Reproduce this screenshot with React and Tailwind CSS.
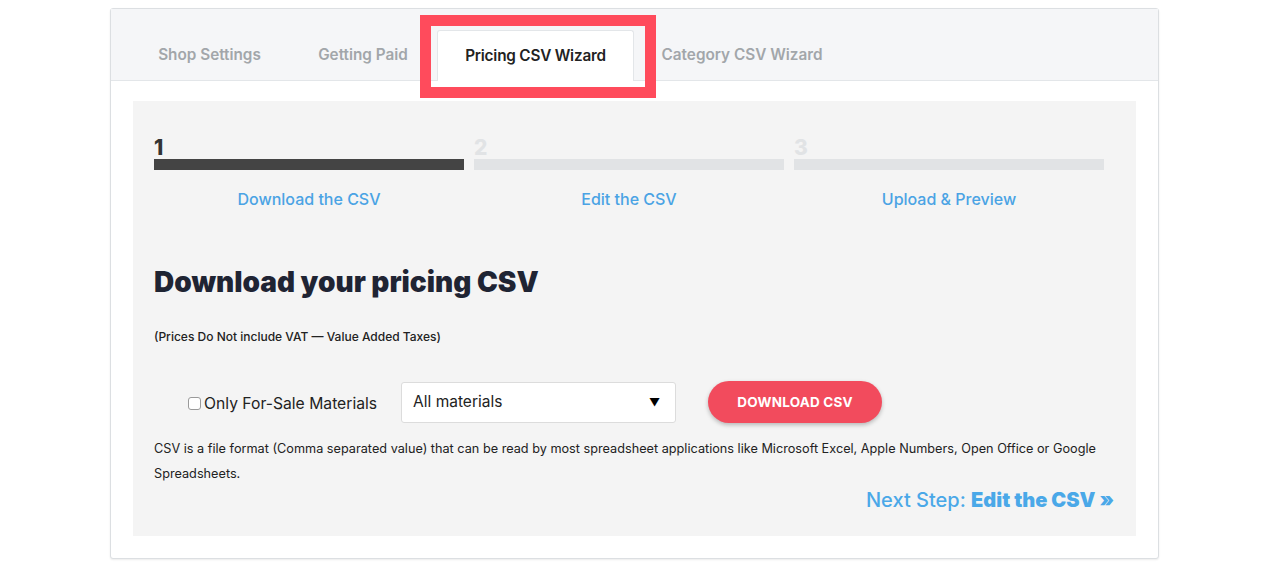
import React from 'react';

const font = { fontFamily: 'Inter, "Noto Sans", sans-serif' };

const tabs = [
  { label: 'Shop Settings', active: false, width: 'w-[159px]' },
  { label: 'Getting Paid', active: false, width: 'w-[148px]' },
  { label: 'Pricing CSV Wizard', active: true, width: 'w-[197px]' },
  { label: 'Category CSV Wizard', active: false, width: 'w-[216px]' },
];

const steps = [
  { num: '1', label: 'Download the CSV', done: true },
  { num: '2', label: 'Edit the CSV', done: false },
  { num: '3', label: 'Upload & Preview', done: false },
];

const App = () => {
  return (
    <div className="relative min-h-screen bg-white pt-2" style={font}>
      <div className="ml-[110px] w-[1049px] rounded-[3px] border border-[#dcdfe2] bg-white shadow-[0_1px_2px_rgba(0,0,0,0.08)]">
        {/* Tabs */}
        <div className="flex h-[72px] items-end border-b border-[#e3e6e9] bg-[#f5f6f8] pl-[19px]">
          {tabs.map((tab) => (
            <div
              key={tab.label}
              className={`-mb-px flex h-[51px] items-center justify-center whitespace-nowrap text-[15.3px] font-semibold ${tab.width} ${
                tab.active
                  ? 'rounded-t-[3px] border border-b-0 border-[#e3e6e9] bg-white tracking-[-0.2px] text-[#222]'
                  : 'text-[#a2a6aa]'
              }`}
            >
              {tab.label}
            </div>
          ))}
        </div>

        {/* Wizard panel */}
        <div className="px-[22px] pb-[22px] pt-[20px]">
          <div className="bg-[#f4f4f4] px-[21px] pb-[22px] pt-[36px]">
            {/* Steps */}
            <div className="grid w-[960px] grid-cols-3">
              {steps.map((step) => (
                <div key={step.num} className="pr-[10px]">
                  <div
                    className={`text-[21px] font-extrabold leading-[22px] ${
                      step.done ? 'text-[#333]' : 'text-[#e1e3e5]'
                    }`}
                  >
                    {step.num}
                  </div>
                  <div className={`h-[11px] ${step.done ? 'bg-[#444]' : 'bg-[#e1e3e5]'}`} />
                  <div className="mt-[17px] text-center text-[16px] font-medium leading-[24px] text-[#4aa3e4]">
                    {step.label}
                  </div>
                </div>
              ))}
            </div>

            <h1 className="mt-[53px] text-[28px] font-black leading-[36px] text-[#1f2433]">
              Download your pricing CSV
            </h1>
            <p className="mt-[27px] text-[12px] font-medium leading-[20px] text-[#222]">
              (Prices Do Not include VAT — Value Added Taxes)
            </p>

            {/* Controls */}
            <div className="mt-[34px] flex h-[42px] items-center">
              <label className="ml-[34px] flex items-center pt-[4px] text-[15.7px] text-[#222]">
                <span className="mr-[3px] inline-block h-[13px] w-[13px] rounded-[3px] border border-[#9a9a9a] bg-white" />
                Only For-Sale Materials
              </label>
              <div className="ml-[24px] flex h-[41px] w-[275px] items-center justify-between rounded-[3px] border border-[#dcdcdc] bg-white pl-[11px] pr-[15px] text-[15.5px] text-[#222]">
                <span>All materials</span>
                <span className="text-[11px] text-black">▼</span>
              </div>
              <button className="ml-[32px] h-[42px] w-[174px] rounded-full bg-[#f24b5d] text-[13.5px] font-bold tracking-[0.2px] text-white shadow-[0_2px_4px_rgba(0,0,0,0.25)]">
                DOWNLOAD CSV
              </button>
            </div>

            <p className="mt-[13px] w-[960px] text-[12.7px] leading-[25px] text-[#222]">
              CSV is a file format (Comma separated value) that can be read by most spreadsheet applications like
              Microsoft Excel, Apple Numbers, Open Office or Google Spreadsheets.
            </p>

            <div className="w-[960px] text-right text-[20px] leading-[28px] text-[#4aa8e8]">
              <span className="font-medium">Next Step: </span>
              <span className="font-black">Edit the CSV »</span>
            </div>
          </div>
        </div>
      </div>

      {/* Highlight overlay */}
      <div className="pointer-events-none absolute left-[420px] top-[15px] h-[83px] w-[236px] border-[11px] border-[#ff4b5c]" />
    </div>
  );
};

export default App;
